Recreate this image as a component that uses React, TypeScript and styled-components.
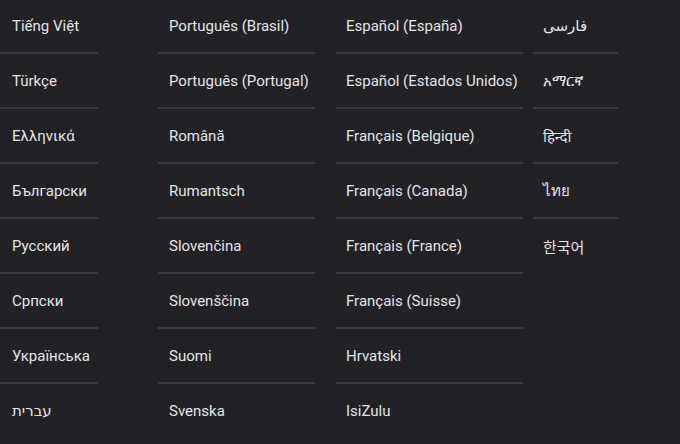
import React from 'react'
import styled, { createGlobalStyle } from 'styled-components'

const GlobalStyle = createGlobalStyle`
  html, body {
    margin: 0;
    padding: 0;
    background: #222126;
  }
  body {
    width: 680px;
    height: 444px;
    overflow: hidden;
    font-family: Roboto, "Noto Sans", "DejaVu Sans", "Noto Sans CJK KR", sans-serif;
  }
`

const Screen = styled.div`
  display: flex;
  align-items: flex-start;
  width: 680px;
  height: 444px;
  background: #222126;
  overflow: hidden;
`

const Column = styled.ul<{ $width: number; $offset: number; $pad: number }>`
  list-style: none;
  margin: -1px 0 0 ${(p) => p.$offset}px;
  padding: 0;
  width: ${(p) => p.$width}px;
  flex-shrink: 0;

  & > li {
    padding-left: ${(p) => p.$pad}px;
  }
`

const Item = styled.li`
  display: flex;
  align-items: center;
  height: 55px;
  box-sizing: border-box;
  padding-top: 1px;
  color: #e4e4e6;
  font-size: 15px;
  white-space: nowrap;
  border-bottom: 2px solid #3a393f;

  &:last-child {
    border-bottom-color: transparent;
  }
`

type LangColumn = {
  width: number
  offset: number
  pad: number
  items: string[]
}

const columns: LangColumn[] = [
  {
    width: 98,
    offset: 0,
    pad: 12,
    items: ['Tiếng Việt', 'Türkçe', 'Ελληνικά', 'Български', 'Русский', 'Српски', 'Українська', 'עברית'],
  },
  {
    width: 157,
    offset: 60,
    pad: 11,
    items: [
      'Português (Brasil)',
      'Português (Portugal)',
      'Română',
      'Rumantsch',
      'Slovenčina',
      'Slovenščina',
      'Suomi',
      'Svenska',
    ],
  },
  {
    width: 187,
    offset: 21,
    pad: 10,
    items: [
      'Español (España)',
      'Español (Estados Unidos)',
      'Français (Belgique)',
      'Français (Canada)',
      'Français (France)',
      'Français (Suisse)',
      'Hrvatski',
      'IsiZulu',
    ],
  },
  {
    width: 85,
    offset: 10,
    pad: 10,
    items: ['فارسی', 'አማርኛ', 'हिन्दी', 'ไทย', '한국어'],
  },
]

export default function App() {
  return (
    <>
      <GlobalStyle />
      <Screen>
        {columns.map((col, ci) => (
          <Column key={ci} $width={col.width} $offset={col.offset} $pad={col.pad}>
            {col.items.map((label) => (
              <Item key={label}>{label}</Item>
            ))}
          </Column>
        ))}
      </Screen>
    </>
  )
}
